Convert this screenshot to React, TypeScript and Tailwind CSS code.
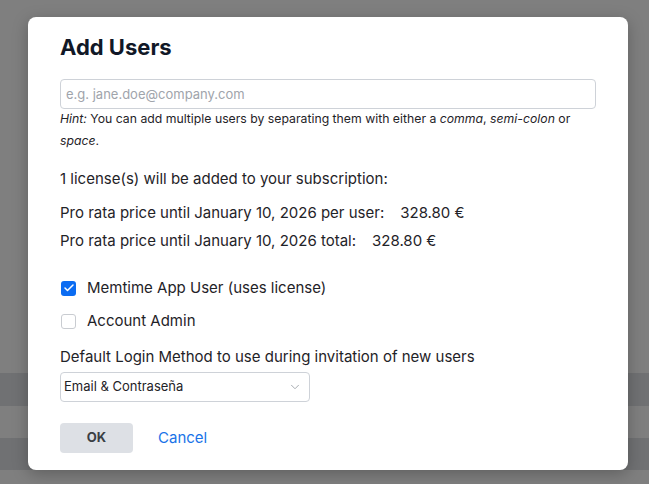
import { ChevronDown, Check } from "lucide-react";

const bands = [
  { top: "h-[373px]", dark: false },
  { top: "h-[33px]", dark: true },
  { top: "h-[32px]", dark: false },
  { top: "h-[32px]", dark: true },
  { top: "h-[14px]", dark: false },
];

export default function App() {
  return (
    <div className="relative h-[484px] w-[649px] overflow-hidden font-['Inter',sans-serif] text-[#1f2328]">
      {/* page behind the overlay */}
      <div className="flex h-full flex-col">
        {bands.map((b, i) => (
          <div key={i} className={`${b.top} ${b.dark ? "bg-[#707173]" : "bg-[#7f7f7f]"}`} />
        ))}
      </div>

      <div className="absolute inset-0 flex items-start pl-[28px] pt-[17px]">
        <div className="flex w-[600px] flex-col rounded-lg bg-white px-8 pb-[17px] pt-[13px] shadow-[0_4px_16px_rgba(0,0,0,0.25)]">
          <h1 className="text-[22px] font-bold leading-[34px] text-[#111827]">Add Users</h1>

          <input
            className="mt-[15px] h-[30px] w-full rounded-[4px] border border-[#ced2d8] px-[5px] text-[13px] placeholder:text-[#a0a4ab] outline-none"
            placeholder="e.g. jane.doe@company.com"
          />
          <p className="mt-[-1px] text-[12.25px] leading-[22px] text-[#1f2328]">
            <i>Hint:</i> You can add multiple users by separating them with either a <i>comma</i>, <i>semi-colon</i> or{" "}
            <i>space</i>.
          </p>

          <p className="mt-[15px] text-[15px] leading-[24px]">1 license(s) will be added to your subscription:</p>

          <div className="mt-[8px] flex flex-col text-[15px] leading-[28px]">
            <p>
              Pro rata price until January 10, 2026 per user:<span className="ml-[16px]">328.80 €</span>
            </p>
            <p>
              Pro rata price until January 10, 2026 total:<span className="ml-[16px]">328.80 €</span>
            </p>
          </div>

          <div className="mt-[21px] flex flex-col gap-[9px] text-[15px]">
            <label className="flex h-[24px] items-center gap-[11px]">
              <span className="ml-[1px] flex h-[15px] w-[15px] items-center justify-center rounded-[3px] bg-[#0b6cf2]">
                <Check className="h-[12px] w-[12px] text-white" strokeWidth={3} />
              </span>
              Memtime App User (uses license)
            </label>
            <label className="flex h-[24px] items-center gap-[11px]">
              <span className="ml-[1px] h-[15px] w-[15px] rounded-[3px] border border-[#c9ccd1] bg-white" />
              Account Admin
            </label>
          </div>

          <p className="mt-[12px] text-[15px] leading-[24px]">Default Login Method to use during invitation of new users</p>

          <div className="mt-[3px] flex h-[30px] w-[250px] items-center justify-between rounded-[4px] border border-[#ced2d8] pl-[3px] pr-[7px] text-[13px]">
            <span>Email &amp; Contraseña</span>
            <ChevronDown className="h-[14px] w-[14px] text-[#9aa0a6]" strokeWidth={1.5} />
          </div>

          <div className="mt-[21px] flex items-center gap-[25px]">
            <button className="h-[30px] w-[73px] rounded-[4px] bg-[#dde0e5] text-[13px] font-bold text-[#3a3f45]">OK</button>
            <button className="text-[15px] text-[#1a73e8]">Cancel</button>
          </div>
        </div>
      </div>
    </div>
  );
}
